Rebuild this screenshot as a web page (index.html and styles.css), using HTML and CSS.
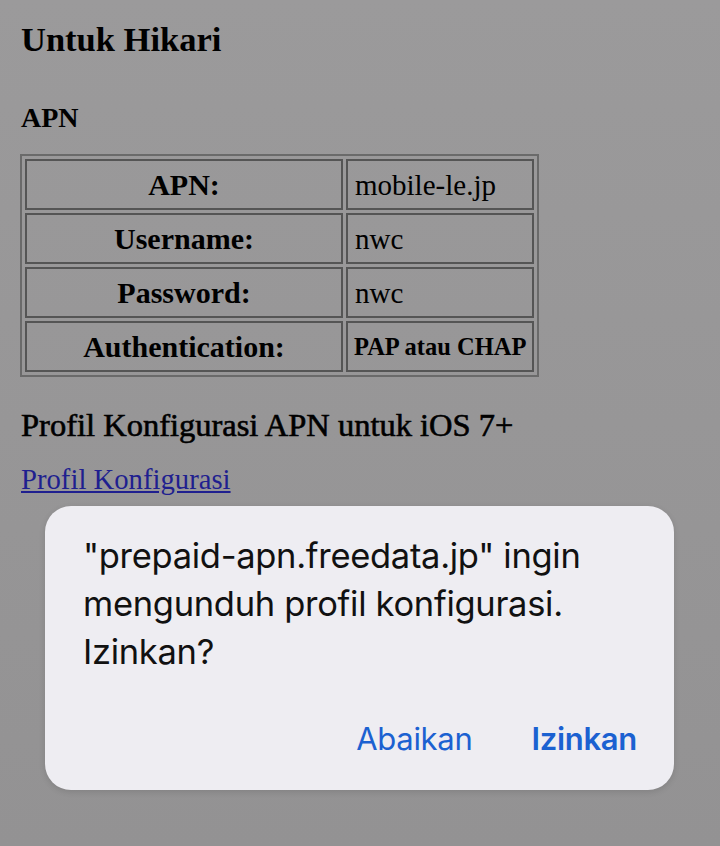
FILE: index.html
```html
<!DOCTYPE html>
<html lang="id">
<head>
<meta charset="utf-8">
<title>Untuk Hikari</title>
<link rel="stylesheet" href="styles.css">
</head>
<body>
<div class="page">
  <h2 class="title">Untuk Hikari</h2>
  <h3 class="sub">APN</h3>
  <table class="apn">
    <tr><th>APN:</th><td>mobile-le.jp</td></tr>
    <tr><th>Username:</th><td>nwc</td></tr>
    <tr><th>Password:</th><td>nwc</td></tr>
    <tr><th>Authentication:</th><td class="small">PAP atau CHAP</td></tr>
  </table>
  <h3 class="profile-head">Profil Konfigurasi APN untuk iOS 7+</h3>
  <p class="link-line"><a href="#" class="link">Profil Konfigurasi</a></p>
</div>
<div class="alert">
  <p class="alert-msg">"prepaid-apn.freedata.jp" ingin mengunduh profil konfigurasi. Izinkan?</p>
  <div class="alert-actions">
    <span class="btn">Abaikan</span>
    <span class="btn btn-bold">Izinkan</span>
  </div>
</div>
</body>
</html>
```
FILE: styles.css
```css
html, body {
  margin: 0;
  padding: 0;
}
body {
  width: 720px;
  height: 846px;
  overflow: hidden;
  background: linear-gradient(#9b9a9b, #939293);
  font-family: "Liberation Serif", "Times New Roman", serif;
  color: #000;
  position: relative;
}
.page {
  padding: 22px 0 0 21px;
}
.title {
  margin: 0;
  font-size: 34.5px;
  font-weight: bold;
  line-height: 34px;
}
.sub {
  margin: 47px 0 0 0;
  font-size: 28px;
  font-weight: bold;
  line-height: 30px;
}
.apn {
  margin-top: 21px;
  margin-left: -1px;
  border: 2px solid #6a6a6a;
  border-spacing: 3px;
  width: 519px;
}
.apn th, .apn td {
  border: 2px solid #555;
  height: 47px;
  padding: 0 7px;
  font-size: 29px;
  line-height: 30px;
  white-space: nowrap;
}
.apn th {
  font-weight: bold;
  text-align: center;
  width: 300px;
  font-size: 30px;
}
.apn td {
  text-align: left;
  font-weight: normal;
}
.apn td.small {
  font-size: 24.5px;
  font-weight: bold;
  padding-left: 6px;
  padding-right: 4px;
}
.profile-head {
  margin: 30px 0 0 0;
  font-size: 32.5px;
  font-weight: normal;
  -webkit-text-stroke: 0.6px #000;
  line-height: 36px;
}
.link-line {
  margin: 20px 0 0 0;
  font-size: 28.7px;
  line-height: 32px;
}
.link {
  color: #1f1f8f;
  text-decoration: underline;
}
.alert {
  position: absolute;
  left: 45px;
  top: 506px;
  width: 629px;
  height: 284px;
  box-sizing: border-box;
  background: #eeedf2;
  border-radius: 26px;
  box-shadow: 0 2px 6px rgba(0,0,0,0.12);
  padding: 26px 30px 0 38px;
  font-family: Inter, "Noto Sans", sans-serif;
}
.alert-msg {
  margin: 0;
  font-size: 34.5px;
  line-height: 48px;
  color: #111;
  letter-spacing: -0.3px;
  width: 540px;
}
.alert-actions {
  display: flex;
  justify-content: flex-end;
  gap: 59px;
  margin-top: 43px;
  padding-right: 7px;
}
.btn {
  font-size: 31px;
  line-height: 40px;
  color: #1b61d1;
  letter-spacing: -0.3px;
}
.btn-bold {
  font-weight: 600;
}
```
